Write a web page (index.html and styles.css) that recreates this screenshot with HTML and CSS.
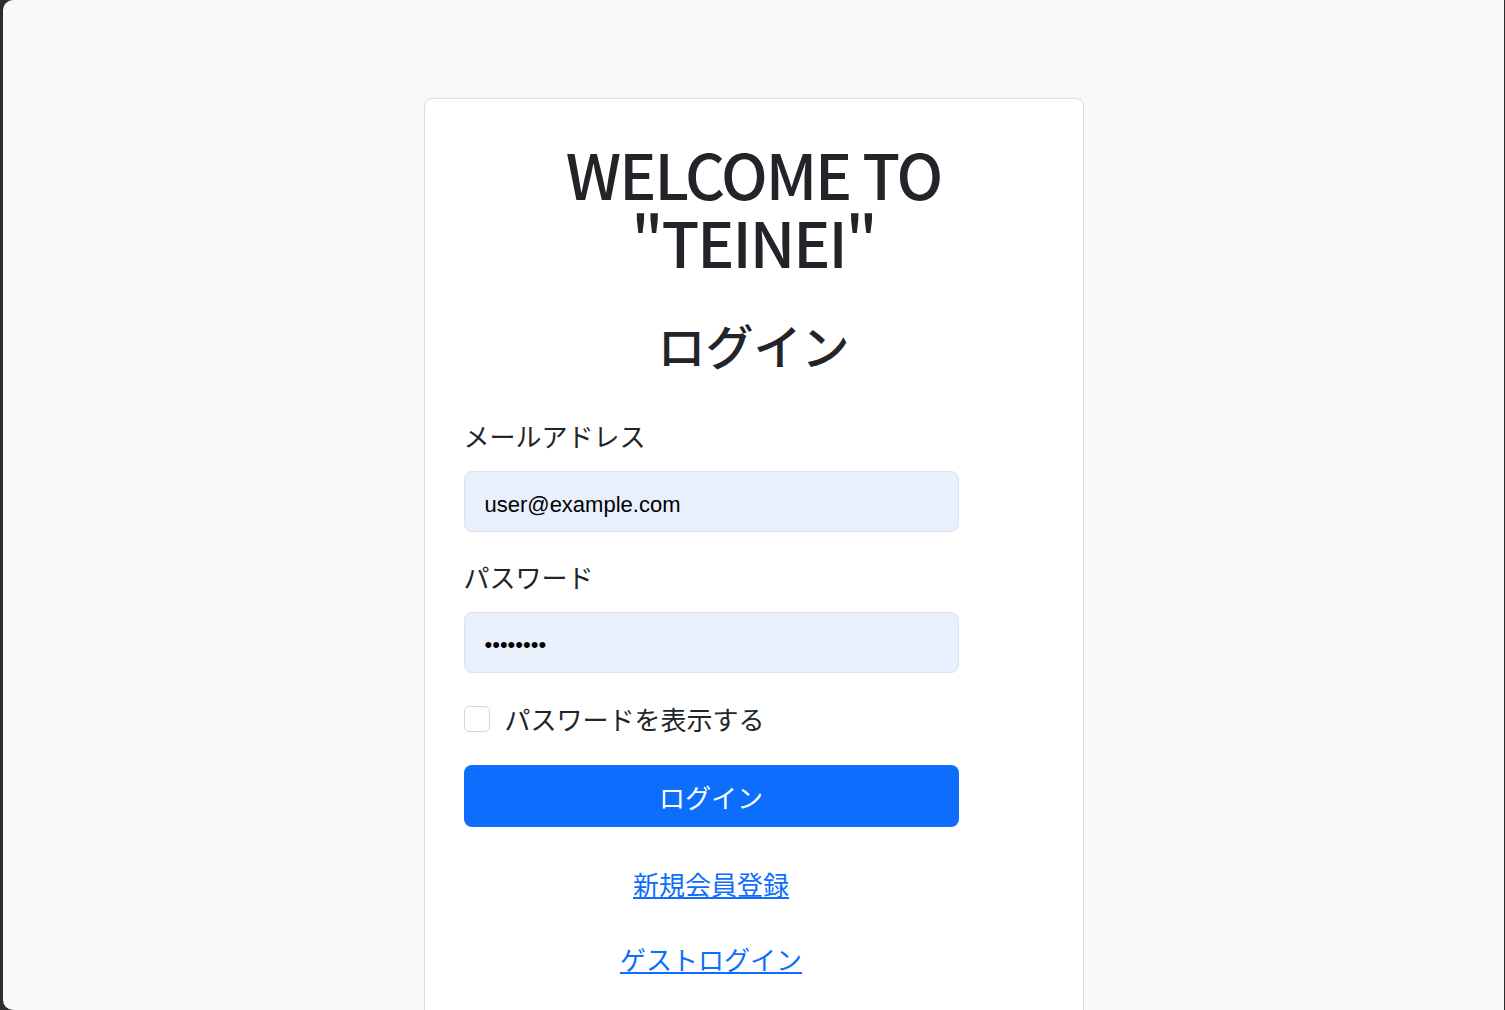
FILE: index.html
```html
<!DOCTYPE html>
<html lang="ja">
<head>
<meta charset="utf-8">
<title>TEINEI ログイン</title>
<link rel="stylesheet" href="styles.css">
</head>
<body>
<div class="window">
  <main class="card">
    <h1 class="title"><span class="title-line">WELCOME TO</span><span class="title-line">"TEINEI"</span></h1>
    <h2 class="subtitle">ログイン</h2>
    <form class="form">
      <label class="label" for="email">メールアドレス</label>
      <input class="input" id="email" type="email" value="user@example.com">
      <label class="label" for="password">パスワード</label>
      <input class="input input-pass" id="password" type="password" value="password">
      <div class="check-row">
        <span class="checkbox"></span>
        <span class="check-label">パスワードを表示する</span>
      </div>
      <button class="btn" type="button">ログイン</button>
      <div class="links">
        <a class="link" href="#">新規会員登録</a>
        <a class="link" href="#">ゲストログイン</a>
      </div>
    </form>
  </main>
</div>
</body>
</html>
```

FILE: styles.css
```css
html {
  background: #2e2e2e;
}
body {
  margin: 0;
  font-family: "Noto Sans CJK JP", "Noto Sans", sans-serif;
  color: #212529;
}
.window {
  margin-left: 3px;
  width: 1501px;
  height: 1010px;
  background: #f8f9fa;
  border-radius: 10px 0 0 10px;
  overflow: hidden;
  display: flex;
  justify-content: center;
  align-items: flex-start;
}
.card {
  margin-top: 98px;
  width: 580px;
  height: 1000px;
  padding: 40px 39px;
  background: #fff;
  border: 1px solid #dcdee0;
  border-radius: 8px;
}
.title {
  margin: 0;
  text-align: center;
  font-size: 62px;
  font-weight: 500;
  line-height: 68px;
  letter-spacing: -2px;
}
.title-line {
  display: block;
  height: 68px;
}
.subtitle {
  margin: 40px 0 0;
  text-align: center;
  font-size: 48px;
  font-weight: 500;
  line-height: 58px;
}
.form {
  width: 495px;
  display: flex;
  flex-direction: column;
}
.label {
  margin-top: 45px;
  font-size: 26px;
  line-height: 36px;
}
.label + .input {
  margin-top: 17px;
}
.label ~ .label {
  margin-top: 27px;
}
.input {
  box-sizing: border-box;
  height: 61px;
  width: 495px;
  padding: 6px 20px 0;
  border: 1px solid #dee2e6;
  border-radius: 8px;
  background: #e8f0fe;
  font-family: "Liberation Sans", Arial, sans-serif;
  font-size: 22px;
  color: #000;
  outline: none;
}
.input-pass {
  padding-top: 4px;
}
.check-row {
  margin-top: 28px;
  display: flex;
  align-items: center;
  gap: 15px;
}
.checkbox {
  box-sizing: border-box;
  width: 26px;
  height: 26px;
  border: 1px solid #d4d6d9;
  border-radius: 5px;
  background: #fff;
}
.check-label {
  font-size: 26px;
  line-height: 36px;
}
.btn {
  margin-top: 28px;
  height: 62px;
  border: none;
  border-radius: 8px;
  background: #0d6efd;
  color: #fff;
  font-family: "Noto Sans CJK JP", sans-serif;
  font-size: 26px;
}
.links {
  margin-top: 39px;
  display: flex;
  flex-direction: column;
  align-items: center;
  gap: 39px;
}
.link {
  color: #0d6efd;
  font-size: 26px;
  line-height: 36px;
  text-decoration: underline;
}
```
